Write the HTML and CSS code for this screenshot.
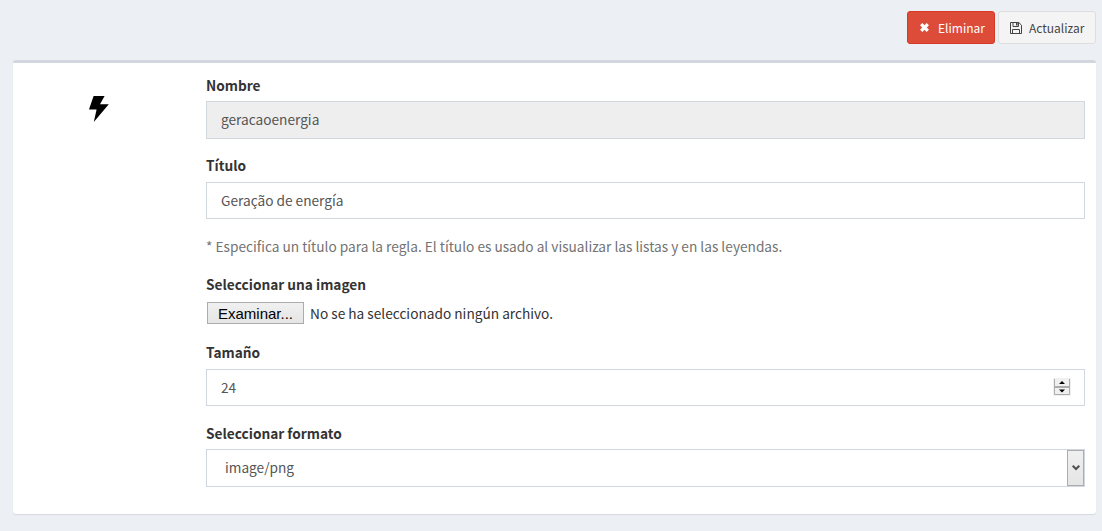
FILE: index.html
```html
<!DOCTYPE html>
<html lang="es">

<head>
    <meta charset="UTF-8">
    <meta name="viewport" content="width=device-width, initial-scale=1.0">
    <title>Geração de energía</title>
    <link rel="stylesheet" href="styles.css">
</head>

<body>
    <div class="toolbar">
        <button type="button" class="btn btn-danger">
            <svg class="icon-times" width="11" height="11" viewBox="0 0 11 11">
                <path d="M2.2 2.2L8.8 8.8M8.8 2.2L2.2 8.8" stroke="#fff" stroke-width="3.3" />
            </svg>
            <span>Eliminar</span>
        </button>
        <button type="button" class="btn btn-default">
            <svg class="icon-save" width="12" height="12" viewBox="0 0 12 12" fill="none" stroke="#444">
                <path d="M.5.5H8.8L11.5 3.2V11.5H.5Z" />
                <path d="M3 .5V4.5H8.5V.5M2.5 11.5V7.5H9.5V11.5" />
                <path d="M6.8 1V3.6" stroke-width="1.6" />
            </svg>
            <span>Actualizar</span>
        </button>
    </div>

    <form class="box">
        <div class="preview">
            <svg width="20" height="26" viewBox="0 0 20 26">
                <path d="M4.6 0H15.6L11 8.2H19.8L4.8 26L7.6 13.6H0Z" fill="#000" />
            </svg>
        </div>
        <div class="fields">
            <div class="form-group name-group">
                <label for="name">Nombre</label>
                <input type="text" class="form-control" id="name" value="geracaoenergia" disabled>
            </div>

            <div class="form-group title-group">
                <label for="title">Título</label>
                <input type="text" class="form-control" id="title" value="Geração de energía">
                <p class="help-block">* Especifica un título para la regla. El título es usado al visualizar las listas y en las leyendas.</p>
            </div>

            <div class="form-group file-group">
                <label for="browse">Seleccionar una imagen</label>
                <div class="file">
                    <button type="button" class="browse" id="browse">Examinar...</button>
                    <span class="file-name">No se ha seleccionado ningún archivo.</span>
                </div>
            </div>

            <div class="form-group size-group">
                <label for="size">Tamaño</label>
                <div class="form-control number">
                    <input type="text" id="size" value="24">
                    <svg class="spinner" width="18" height="18" viewBox="0 0 18 18">
                        <path d="M0 0H18V18H0Z" fill="#f0f0f0" />
                        <path d="M1.5 1V16.5H16.5V1" fill="#f0f0f0" stroke="#acacac" />
                        <path d="M1 9H17" stroke="#acacac" stroke-width="2" />
                        <path d="M6 6L9 3L12 6ZM6 11.5H12L9 14.5Z" fill="#000" />
                    </svg>
                </div>
            </div>

            <div class="form-group format-group">
                <label for="format">Seleccionar formato</label>
                <div class="form-control select">
                    <select id="format">
                        <option>image/png</option>
                    </select>
                    <span class="select-arrow">
                        <svg width="8" height="6" viewBox="0 0 8 6">
                            <path d="M.7 .7L4 4L7.3 .7" fill="none" stroke="#505050" stroke-width="2" />
                        </svg>
                    </span>
                </div>
            </div>
        </div>
    </form>
</body>

</html>
```
FILE: styles.css
```css
* {
    margin: 0;
    padding: 0;
    box-sizing: border-box;
}

body {
    height: 531px;
    padding: 11px 6px 0 13px;
    background-color: #ecf0f5;
    color: #333;
    font-family: "Source Sans Pro", "Noto Sans CJK SC", sans-serif;
    font-size: 13.68px;
    line-height: 18px;
    overflow: hidden;
}

.toolbar {
    display: flex;
    justify-content: flex-end;
    gap: 3px;
}

.btn {
    display: flex;
    align-items: center;
    height: 33px;
    padding: 0 11px;
    border: 1px solid #ddd;
    border-radius: 3px;
    font-family: inherit;
    font-size: 12px;
    line-height: 18px;
}

.btn-danger {
    width: 88px;
    gap: 8px;
    background-color: #dd4b39;
    border-color: #d73925;
    color: #fff;
}

.btn-default {
    width: 98px;
    gap: 7px;
    background-color: #f4f4f4;
    color: #444;
}

.btn svg {
    flex: none;
}

.box {
    display: flex;
    height: 454px;
    margin-top: 16px;
    border-top: 3px solid #d2d6de;
    border-radius: 3px;
    background-color: #fff;
    box-shadow: 0 1px 1px rgba(0, 0, 0, 0.1);
}

.preview {
    flex: none;
    width: 193px;
    padding: 33px 0 0 76px;
}

.fields {
    width: 879px;
    padding-top: 13px;
}

.form-group label {
    display: block;
    height: 20px;
    font-weight: 700;
}

.form-control {
    display: block;
    width: 100%;
    height: 37px;
    border: 1px solid #d2d6de;
    background-color: #fff;
    color: #555;
    font-family: inherit;
    font-size: 13.68px;
    padding: 0 14px 2px;
}

.form-control:disabled {
    background-color: #eee;
}

.name-group {
    height: 80px;
}

.name-group label {
    margin-bottom: 5px;
}

.name-group .form-control,
.format-group .form-control {
    height: 38px;
}

.title-group {
    height: 119px;
}

.title-group label {
    margin-bottom: 6px;
}

.help-block {
    margin-top: 18px;
    color: #737373;
}

.file-group {
    height: 68px;
}

.file {
    display: flex;
    align-items: center;
    gap: 6px;
    padding: 7px 0 0 1px;
}

.browse {
    width: 97px;
    height: 22px;
    border: 1px solid #acacac;
    background: linear-gradient(#f0f0f0, #e5e5e5);
    color: #000;
    font-family: "Liberation Sans", sans-serif;
    font-size: 15px;
}

.size-group {
    height: 81px;
}

.size-group label {
    margin-bottom: 6px;
}

.number,
.select {
    display: flex;
    align-items: center;
    justify-content: space-between;
}

.number {
    padding-right: 13px;
}

.number input,
.select select {
    flex: 1;
    border: none;
    outline: none;
    appearance: none;
    background: none;
    color: #555;
    font-family: inherit;
    font-size: 13.68px;
}

.format-group label {
    margin-bottom: 5px;
}

.select {
    padding: 0 0 0 18px;
}

.select select {
    padding-bottom: 2px;
}

.select-arrow {
    display: flex;
    align-items: center;
    justify-content: center;
    width: 17px;
    height: 36px;
    border: 1px solid #acacac;
    background: linear-gradient(#f0f0f0, #e5e5e5);
}
```
